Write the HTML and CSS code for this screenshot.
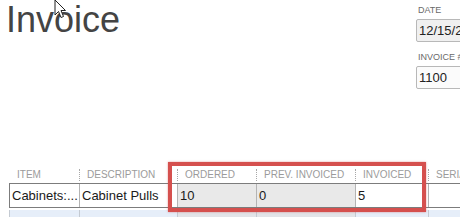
FILE: index.html
```html
<!DOCTYPE html>
<html lang="en">
<head>
    <meta charset="UTF-8">
    <title>Invoice</title>
    <link rel="stylesheet" href="styles.css">
</head>
<body>
    <div class="page">
        <div class="top">
            <h1 class="title">Invoice</h1>
            <div class="fields">
                <div class="field">
                    <div class="label">DATE</div>
                    <div class="input date">12/15/2016</div>
                </div>
                <div class="field">
                    <div class="label">INVOICE #</div>
                    <div class="input">1100</div>
                </div>
            </div>
        </div>

        <div class="grid">
            <div class="head">
                <div class="hcell first">ITEM</div>
                <div class="hcell">DESCRIPTION</div>
                <div class="hcell">ORDERED</div>
                <div class="hcell">PREV. INVOICED</div>
                <div class="hcell">INVOICED</div>
                <div class="hcell">SERIAL #</div>
            </div>
            <div class="row">
                <div class="cell first">Cabinets:...</div>
                <div class="cell">Cabinet Pulls</div>
                <div class="cell readonly">10</div>
                <div class="cell readonly">0</div>
                <div class="cell">5</div>
                <div class="cell"></div>
            </div>
            <div class="row next">
                <div class="cell first"></div>
                <div class="cell"></div>
                <div class="cell readonly"></div>
                <div class="cell readonly"></div>
                <div class="cell"></div>
                <div class="cell"></div>
            </div>
        </div>

        <!-- callout drawn over the grid -->
        <div class="highlight"></div>

        <svg class="cursor" width="13" height="20" viewBox="0 0 13 20">
            <path d="M1 1 L1 16 L4.5 12.5 L7 18.5 L9.5 17.5 L7 11.5 L11.5 11.5 Z" fill="#fff" stroke="#222" stroke-width="1" stroke-linejoin="round"/>
        </svg>
    </div>
</body>
</html>
```

FILE: styles.css
```css
body {
    margin: 0;
    font-family: "Liberation Sans", Arial, sans-serif;
    background: #fff;
}
.page {
    position: relative;
    width: 460px;
    height: 217px;
    overflow: hidden;
}
.top {
    height: 165px;
    display: flex;
    justify-content: space-between;
}
.title {
    margin: 0;
    padding-left: 6px;
    font-size: 36px;
    font-weight: normal;
    color: #444;
    line-height: 40px;
}
.fields {
    width: 44px;
    padding-top: 5px;
}
.field {
    margin-bottom: 10px;
}
.label {
    font-size: 9px;
    line-height: 11px;
    color: #6a6a6a;
    padding-left: 2px;
    margin-bottom: 3px;
    white-space: nowrap;
}
.input {
    box-sizing: border-box;
    width: 80px;
    height: 23px;
    border: 1px solid #b8b8b8;
    border-radius: 2px;
    background: #fbfbfb;
    padding-left: 2px;
    font-size: 13px;
    line-height: 21px;
    color: #222;
}
.input.date {
    background: #f0f0f0;
}
.grid {
    margin-left: 9px;
}
.head, .row {
    display: grid;
    grid-template-columns: 70px 98px 79px 99px 73px 1fr;
}
.head {
    padding: 4px 0 2px;
}
.hcell {
    height: 12px;
    line-height: 12px;
    font-size: 10px;
    color: #9b9b9b;
    padding-left: 7px;
    border-left: 1px dotted #a8a8a8;
    white-space: nowrap;
    overflow: hidden;
}
.hcell.first {
    border-left-color: transparent;
}
.row {
    border-top: 1px solid #7c7c7c;
    border-bottom: 1px solid #7c7c7c;
}
.cell {
    height: 23px;
    line-height: 23px;
    font-size: 13px;
    color: #1a1a1a;
    padding-left: 2px;
    border-left: 1px solid #b4b4b4;
    background: #fff;
    white-space: nowrap;
    overflow: hidden;
}
.cell.first {
    border-left-color: #7c7c7c;
}
.cell.readonly {
    background: #e9e9e9;
}
.row.next {
    margin-top: 2px;
    border: none;
}
.row.next .cell {
    background: #e6eef9;
    border-left-color: #c4cad2;
}
.row.next .cell.readonly {
    background: #e2e4e8;
}
.highlight {
    position: absolute;
    left: 168px;
    top: 162px;
    width: 250px;
    height: 42px;
    border: 4px solid #d5504e;
    box-shadow: 0 0 2px rgba(200, 60, 60, 0.5);
}
.cursor {
    position: absolute;
    left: 54px;
    top: -1px;
}
```
